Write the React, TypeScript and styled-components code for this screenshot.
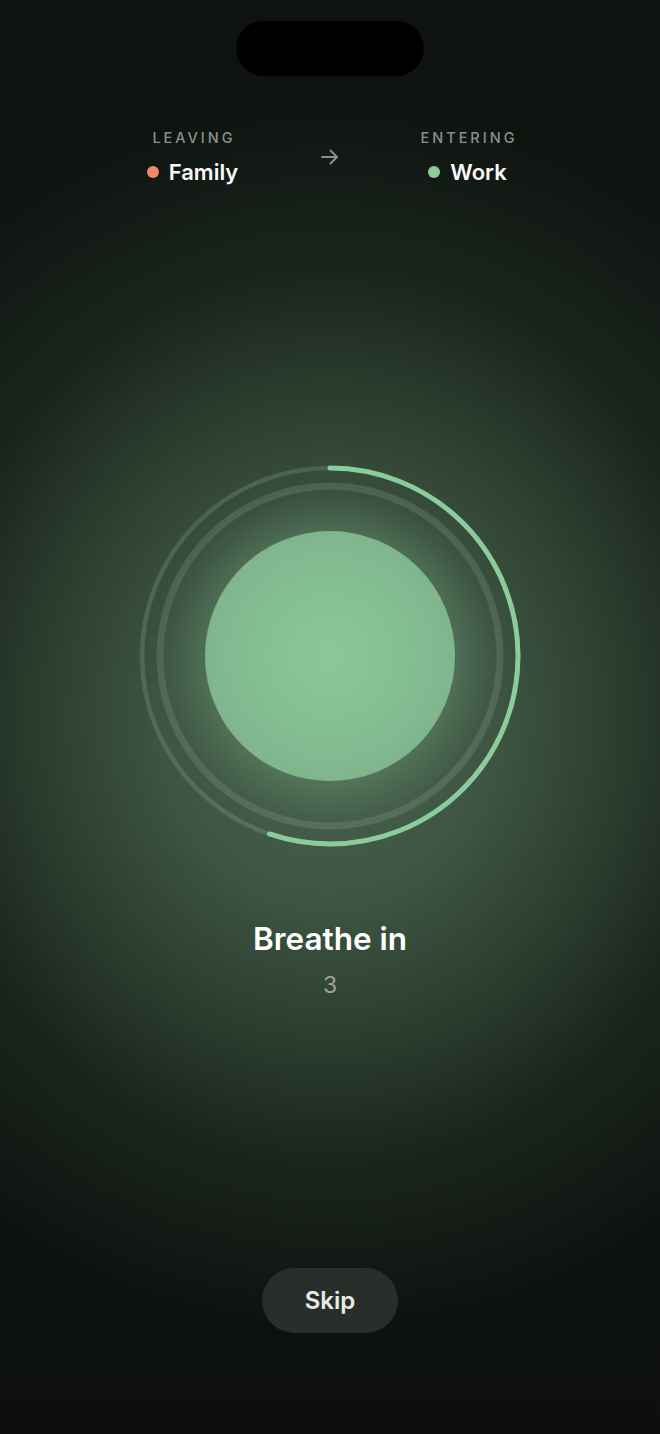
import styled, { createGlobalStyle } from 'styled-components';

const GlobalStyle = createGlobalStyle`
  html, body {
    margin: 0;
    padding: 0;
    background: #0d110e;
  }
  * {
    box-sizing: border-box;
  }
`;

const RING_R = 188;
const TRACK_R = 170;
const PROGRESS = 0.552;

const App = () => {
  const circ = 2 * Math.PI * RING_R;

  return (
    <>
      <GlobalStyle />
      <Screen>
        <Island />

        <Transition>
          <Side>
            <SideLabel>Leaving</SideLabel>
            <SideName>
              <Dot $color="#ee8a6c" />
              Family
            </SideName>
          </Side>
          <Arrow viewBox="0 0 20 18" aria-hidden>
            <path d="M2 9h15M10.5 2.5 17 9l-6.5 6.5" fill="none" stroke="#8b8f8b" strokeWidth="2" strokeLinecap="round" strokeLinejoin="round" />
          </Arrow>
          <Side>
            <SideLabel>Entering</SideLabel>
            <SideName>
              <Dot $color="#8cca9a" />
              Work
            </SideName>
          </Side>
        </Transition>

        <Stage>
          <Rings viewBox="0 0 400 400">
            <circle cx="200" cy="200" r={RING_R} fill="none" stroke="rgba(200,230,205,0.16)" strokeWidth="4.5" />
            <circle cx="200" cy="200" r={TRACK_R} fill="none" stroke="rgba(200,230,205,0.14)" strokeWidth="7" />
            <circle
              cx="200"
              cy="200"
              r={RING_R}
              fill="none"
              stroke="#8ccc9b"
              strokeWidth="5"
              strokeLinecap="round"
              strokeDasharray={`${circ * PROGRESS} ${circ}`}
              transform="rotate(-90 200 200)"
            />
          </Rings>
          <Glow />
          <Orb />
        </Stage>

        <Phase>Breathe in</Phase>
        <Count>3</Count>

        <SkipButton type="button">Skip</SkipButton>
      </Screen>
    </>
  );
};

const Screen = styled.div`
  min-height: 1434px;
  width: 660px;
  display: flex;
  flex-direction: column;
  align-items: center;
  padding: 21px 0 101px;
  font-family: Inter, "Noto Sans", "Liberation Sans", sans-serif;
  color: #fff;
  background:
    radial-gradient(ellipse 560px 620px at 50% 50%, #4b6650 0%, #3d5542 30%, #2c3d2f 52%, #1a241c 72%, transparent 100%),
    linear-gradient(180deg, #0e1210 0%, #111814 40%, #101612 70%, #0c0f0d 100%);
`;

const Island = styled.div`
  width: 188px;
  height: 55px;
  border-radius: 28px;
  background: #000;
`;

const Transition = styled.div`
  margin-top: 53px;
  display: grid;
  grid-template-columns: 137.5px 137.5px 137.5px;
  align-items: center;
`;

const Side = styled.div`
  display: flex;
  flex-direction: column;
  align-items: center;
  gap: 11px;
`;

const SideLabel = styled.div`
  font-size: 14.5px;
  line-height: 18px;
  font-weight: 500;
  letter-spacing: 3px;
  text-transform: uppercase;
  color: #8b8f8b;
  margin-right: -3px;
`;

const SideName = styled.div`
  display: flex;
  align-items: center;
  gap: 10px;
  font-size: 22px;
  line-height: 28px;
  font-weight: 600;
  color: #fafafa;
`;

const Dot = styled.span<{ $color: string }>`
  width: 12px;
  height: 12px;
  border-radius: 50%;
  background: ${(p) => p.$color};
`;

const Arrow = styled.svg`
  justify-self: center;
  width: 20px;
  height: 18px;
  margin-top: -2px;
`;

const Stage = styled.div`
  margin-top: 270px;
  width: 400px;
  height: 400px;
  display: grid;
  place-items: center;

  & > * {
    grid-area: 1 / 1;
  }
`;

const Rings = styled.svg`
  width: 400px;
  height: 400px;
`;

const Glow = styled.div`
  width: 340px;
  height: 340px;
  border-radius: 50%;
  background: radial-gradient(circle, rgba(130, 180, 140, 0.28) 35%, rgba(130, 180, 140, 0.1) 60%, transparent 72%);
`;

const Orb = styled.div`
  width: 250px;
  height: 250px;
  border-radius: 50%;
  background: radial-gradient(circle, #8bc799 0%, #84bc92 50%, #7aab86 100%);
  box-shadow: 0 0 40px rgba(138, 197, 152, 0.18);
`;

const Phase = styled.div`
  margin-top: 63px;
  font-size: 31.5px;
  line-height: 40px;
  font-weight: 600;
  color: #fff;
`;

const Count = styled.div`
  margin-top: 11px;
  font-size: 23px;
  line-height: 30px;
  font-weight: 400;
  color: #9aa59b;
`;

const SkipButton = styled.button`
  margin-top: auto;
  width: 136px;
  height: 65px;
  border: none;
  border-radius: 33px;
  background: #2a2e2b;
  color: #e8eae8;
  font-family: inherit;
  font-size: 24px;
  font-weight: 600;
  cursor: pointer;
`;

export default App;
